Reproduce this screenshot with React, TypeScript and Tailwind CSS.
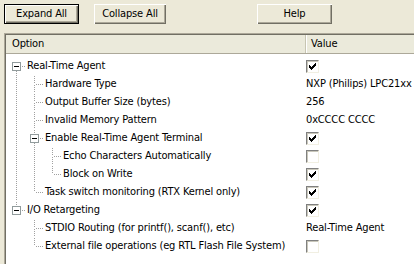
import React from 'react'

type Cell = 'line' | 'none'
type Joint = 'first' | 'tee' | 'elbow' | 'last'

interface Row {
  label: string
  value?: string
  check?: boolean
  guides: Cell[]
  joint: Joint
  box?: boolean
}

const ROWS: Row[] = [
  { label: 'Real-Time Agent', check: true, guides: [], joint: 'first', box: true },
  { label: 'Hardware Type', value: 'NXP (Philips) LPC21xx', guides: ['line'], joint: 'tee' },
  { label: 'Output Buffer Size (bytes)', value: '256', guides: ['line'], joint: 'tee' },
  { label: 'Invalid Memory Pattern', value: '0xCCCC CCCC', guides: ['line'], joint: 'tee' },
  { label: 'Enable Real-Time Agent Terminal', check: true, guides: ['line'], joint: 'tee', box: true },
  { label: 'Echo Characters Automatically', check: false, guides: ['line', 'line'], joint: 'tee' },
  { label: 'Block on Write', check: true, guides: ['line', 'line'], joint: 'elbow' },
  { label: 'Task switch monitoring (RTX Kernel only)', check: true, guides: ['line'], joint: 'elbow' },
  { label: 'I/O Retargeting', check: true, guides: [], joint: 'last', box: true },
  { label: 'STDIO Routing (for printf(), scanf(), etc)', value: 'Real-Time Agent', guides: ['none'], joint: 'tee' },
  { label: 'External file operations (eg RTL Flash File System)', check: false, guides: ['none'], joint: 'elbow' },
]

const DOT = '#a0a0a0'

function GuideCell({ kind }: { kind: Cell }) {
  return (
    <svg width="18" height="18" className="shrink-0" shapeRendering="crispEdges">
      {kind === 'line' && <line x1="9.5" y1="0" x2="9.5" y2="18" stroke={DOT} strokeDasharray="1 1" />}
    </svg>
  )
}

function JointCell({ joint, box }: { joint: Joint; box?: boolean }) {
  const up = joint !== 'first'
  const down = joint === 'first' || joint === 'tee'
  return (
    <svg width="18" height="18" className="shrink-0" shapeRendering="crispEdges">
      {up && <line x1="9.5" y1="1" x2="9.5" y2={box ? 5 : 9} stroke={DOT} strokeDasharray="1 1" />}
      {down && <line x1="9.5" y1={box ? 14 : 10} x2="9.5" y2="18" stroke={DOT} strokeDasharray="1 1" />}
      <line x1={box ? 15 : 11} y1="9.5" x2="18" y2="9.5" stroke={DOT} strokeDasharray="1 1" />
      {box && (
        <g>
          <rect x="5.5" y="5.5" width="8" height="8" fill="#fff" stroke="#919b9c" />
          <line x1="7" y1="9.5" x2="12" y2="9.5" stroke="#000" />
        </g>
      )}
    </svg>
  )
}

function CheckBox({ on }: { on: boolean }) {
  return (
    <div className="w-[13px] h-[13px] bg-white border border-t-[#808080] border-l-[#808080] border-b-[#f1efe2] border-r-[#f1efe2] shadow-[inset_1px_1px_#c9c7ba]">
      {on && (
        <svg width="11" height="11" shapeRendering="crispEdges">
          <rect x="2" y="4" width="1" height="3" fill="#000" />
          <rect x="3" y="5" width="1" height="3" fill="#000" />
          <rect x="4" y="6" width="1" height="3" fill="#000" />
          <rect x="5" y="5" width="1" height="3" fill="#000" />
          <rect x="6" y="4" width="1" height="3" fill="#000" />
          <rect x="7" y="3" width="1" height="3" fill="#000" />
          <rect x="8" y="2" width="1" height="3" fill="#000" />
        </svg>
      )}
    </div>
  )
}

function Button({ label, width, isDefault }: { label: string; width: string; isDefault?: boolean }) {
  return (
    <div className={`${width} h-5 ${isDefault ? 'border border-black' : ''}`}>
      <div className="h-full flex items-center justify-center bg-[#ece9d8] shadow-[inset_1px_1px_#fff,inset_-1px_-1px_#716f64,inset_-2px_-2px_#aca899] text-[11px] text-black">
        {label}
      </div>
    </div>
  )
}

export default function App() {
  return (
    <div
      className="w-[414px] h-[264px] overflow-hidden bg-[#ece9d8] select-none tracking-[-0.15px]"
      style={{ fontFamily: '"DejaVu Sans Condensed", "Liberation Sans", Arial, sans-serif' }}
    >
      {/* toolbar */}
      <div className="flex pt-1 pl-1">
        <Button label="Expand All" width="w-[75px]" isDefault />
        <div className="ml-[15px]">
          <Button label="Collapse All" width="w-[72px]" />
        </div>
        <div className="ml-[91px]">
          <Button label="Help" width="w-[75px]" />
        </div>
      </div>

      {/* property list */}
      <div className="mt-[9px] ml-1 w-[440px] h-[240px] border-t border-l border-[#aca899]">
        <div className="h-full border-t border-l border-[#716f64] bg-white">
          <div className="flex h-[19px] bg-[#ebeadb] border-b border-[#aca899] text-[11px] text-black">
            <div className="w-[299px] pl-[6px] flex items-center">Option</div>
            <div className="flex items-center border-l border-[#c7c5b2] shadow-[inset_1px_0_#fff] pl-[5px]">Value</div>
          </div>
          <div className="pt-[3px]">
            {ROWS.map((r, i) => (
              <div key={i} className="flex h-[18px] items-center text-[11px] text-black">
                <div className="w-[299px] flex items-center pl-px">
                  {r.guides.map((g, j) => (
                    <GuideCell key={j} kind={g} />
                  ))}
                  <JointCell joint={r.joint} box={r.box} />
                  <span className="pl-[2px] whitespace-nowrap">{r.label}</span>
                </div>
                <div className="pl-px flex items-center">
                  {r.value !== undefined ? (
                    <span className="whitespace-nowrap">{r.value}</span>
                  ) : (
                    <CheckBox on={!!r.check} />
                  )}
                </div>
              </div>
            ))}
          </div>
        </div>
      </div>
    </div>
  )
}
